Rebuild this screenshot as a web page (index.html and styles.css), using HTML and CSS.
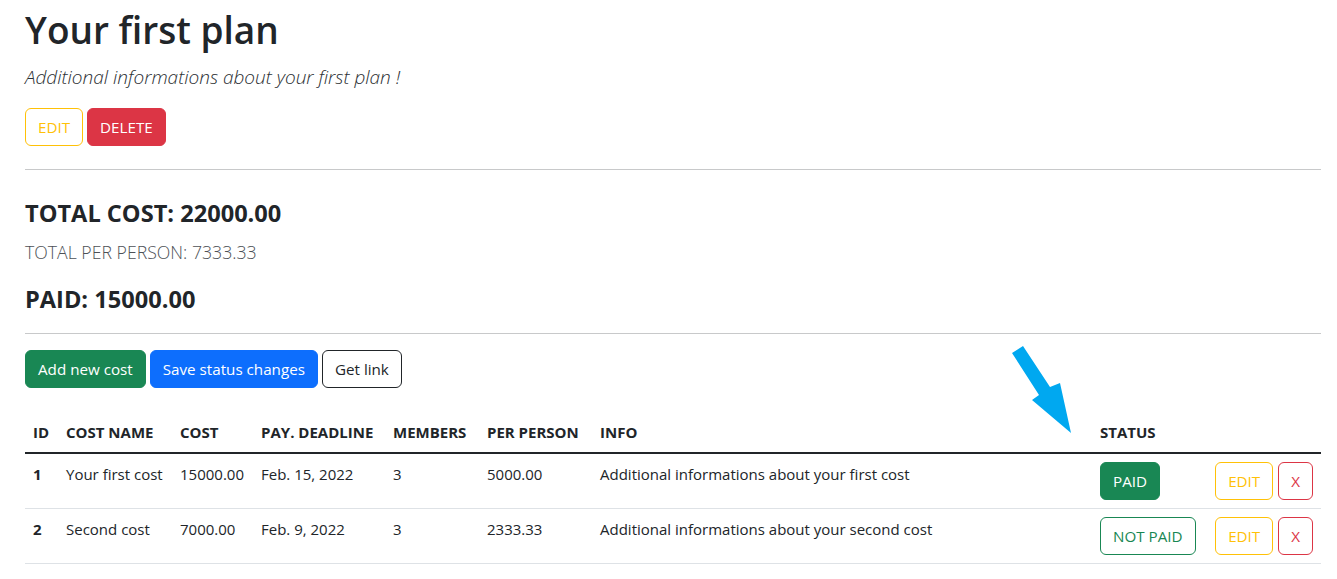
FILE: index.html
```html
<!DOCTYPE html>
<html lang="en">
<head>
<meta charset="utf-8">
<title>Your first plan</title>
<link rel="stylesheet" href="styles.css">
</head>
<body>
<main class="page">
  <h1 class="title">Your first plan</h1>
  <p class="lead">Additional informations about your first plan !</p>
  <div class="btn-row">
    <button class="btn btn-outline-warning">EDIT</button>
    <button class="btn btn-danger">DELETE</button>
  </div>
  <hr class="rule rule-top">
  <h4 class="total">TOTAL COST: 22000.00</h4>
  <p class="per-person">TOTAL PER PERSON: 7333.33</p>
  <h4 class="paid">PAID: 15000.00</h4>
  <hr class="rule rule-mid">
  <div class="btn-row">
    <button class="btn btn-success">Add new cost</button>
    <button class="btn btn-primary">Save status changes</button>
    <button class="btn btn-outline-dark">Get link</button>
  </div>
  <table class="costs">
    <colgroup>
      <col class="c-id"><col class="c-name"><col class="c-cost"><col class="c-date"><col class="c-members"><col class="c-per"><col class="c-info"><col class="c-status"><col class="c-actions">
    </colgroup>
    <thead>
      <tr>
        <th>ID</th><th>COST NAME</th><th>COST</th><th>PAY. DEADLINE</th><th>MEMBERS</th><th>PER PERSON</th><th>INFO</th><th>STATUS</th><th></th>
      </tr>
    </thead>
    <tbody>
      <tr>
        <th>1</th><td>Your first cost</td><td>15000.00</td><td>Feb. 15, 2022</td><td>3</td><td>5000.00</td><td>Additional informations about your first cost</td>
        <td><button class="btn btn-success">PAID</button></td>
        <td><div class="row-actions"><button class="btn btn-outline-warning">EDIT</button><button class="btn btn-outline-danger">X</button></div></td>
      </tr>
      <tr>
        <th>2</th><td>Second cost</td><td>7000.00</td><td>Feb. 9, 2022</td><td>3</td><td>2333.33</td><td>Additional informations about your second cost</td>
        <td><button class="btn btn-outline-success">NOT PAID</button></td>
        <td><div class="row-actions"><button class="btn btn-outline-warning">EDIT</button><button class="btn btn-outline-danger">X</button></div></td>
      </tr>
    </tbody>
  </table>
  <svg class="pointer" width="80" height="100" viewBox="0 0 80 100" aria-hidden="true">
    <polygon points="12,13 23,6 50,47 60,43 71,93 32,60 39,55" fill="#00a8f0"/>
  </svg>
</main>
</body>
</html>
```
FILE: styles.css
```css
* { box-sizing: border-box; }

body {
  margin: 0;
  background: #fff;
  color: #212529;
  font-family: "Open Sans", "Noto Sans", sans-serif;
  font-size: 15px;
  line-height: 24px;
}

.page {
  position: relative;
  padding: 6px 16px 0 25px;
}

.title {
  margin: 0 0 8px;
  font-size: 37px;
  line-height: 48px;
  font-weight: 600;
}

.lead {
  margin: 0 0 16px;
  font-size: 19px;
  line-height: 30px;
  font-weight: 300;
  font-style: italic;
  color: #2b2f33;
}

.btn-row {
  display: flex;
  gap: 4px;
}

.btn {
  display: inline-block;
  font-family: inherit;
  font-size: 15.2px;
  line-height: 24px;
  font-weight: 400;
  padding: 6px 12px;
  border: 1px solid transparent;
  border-radius: 6px;
  background: transparent;
  cursor: pointer;
  white-space: nowrap;
}

.btn-outline-warning { color: #ffc107; border-color: #ffc107; }
.btn-danger { color: #fff; background: #dc3545; border-color: #dc3545; }
.btn-outline-danger { color: #dc3545; border-color: #dc3545; }
.btn-success { color: #fff; background: #198754; border-color: #198754; }
.btn-outline-success { color: #198754; border-color: #198754; }
.btn-primary { color: #fff; background: #0d6efd; border-color: #0d6efd; }
.btn-outline-dark { color: #212529; border-color: #212529; }

.rule {
  border: 0;
  border-top: 1px solid #c8c9ca;
  margin: 0;
}
.rule-top { margin-top: 23px; }
.rule-mid { margin-top: 19px; margin-bottom: 16px; }

.total, .paid {
  margin: 0;
  font-size: 23.6px;
  line-height: 29px;
  font-weight: 700;
}
.total { margin-top: 29px; }
.paid { margin-top: 20px; }

.per-person {
  margin: 11px 0 0;
  font-size: 17.7px;
  line-height: 26px;
  font-weight: 300;
  color: #4d5156;
}

.costs {
  margin-top: 24px;
  width: 100%;
  table-layout: fixed;
  border-collapse: collapse;
}

.c-id { width: 33px; }
.c-name { width: 114px; }
.c-cost { width: 81px; }
.c-date { width: 132px; }
.c-members { width: 94px; }
.c-per { width: 113px; }
.c-info { width: 500px; }
.c-status { width: 108px; }
.c-actions { width: 121px; }

.costs th, .costs td {
  padding: 8px;
  text-align: left;
  vertical-align: top;
  white-space: nowrap;
  border-bottom: 1px solid #dee2e6;
}

.costs thead th {
  border-bottom: 2px solid #212529;
  font-weight: 700;
}

.costs tbody th { font-weight: 700; }

.row-actions {
  display: flex;
  justify-content: flex-end;
  gap: 5px;
}

.pointer {
  position: absolute;
  left: 1000px;
  top: 340px;
}
```
